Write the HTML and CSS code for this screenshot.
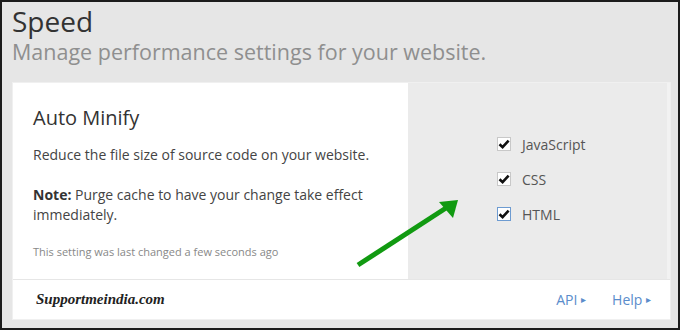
FILE: index.html
```html
<!DOCTYPE html>
<html lang="en">
<head>
    <meta charset="UTF-8">
    <title>Speed</title>
    <link rel="stylesheet" href="styles.css">
</head>
<body>
    <div class="frame">
        <div class="page-head">
            <h1 class="title">Speed</h1>
            <p class="subtitle">Manage performance settings for your website.</p>
        </div>

        <div class="card">
            <div class="card-body">
                <div class="card-main">
                    <h2 class="card-title">Auto Minify</h2>
                    <p class="text">Reduce the file size of source code on your website.</p>
                    <p class="text"><strong>Note:</strong> Purge cache to have your change take effect immediately.</p>
                    <p class="changed">This setting was last changed a few seconds ago</p>
                </div>

                <div class="card-side">
                    <label class="check">
                        <span class="box">
                            <svg width="14" height="14" viewBox="0 0 14 14"><path d="M2.5 7.2 L5.6 10.2 L11.6 3.6" fill="none" stroke="#111" stroke-width="2.6"/></svg>
                        </span>
                        JavaScript
                    </label>
                    <label class="check">
                        <span class="box">
                            <svg width="14" height="14" viewBox="0 0 14 14"><path d="M2.5 7.2 L5.6 10.2 L11.6 3.6" fill="none" stroke="#111" stroke-width="2.6"/></svg>
                        </span>
                        CSS
                    </label>
                    <label class="check">
                        <span class="box focus">
                            <svg width="14" height="14" viewBox="0 0 14 14"><path d="M2.5 7.2 L5.6 10.2 L11.6 3.6" fill="none" stroke="#111" stroke-width="2.6"/></svg>
                        </span>
                        HTML
                    </label>
                </div>
            </div>

            <div class="card-foot">
                <span class="brand">Supportmeindia.com</span>
                <div class="links">
                    <a class="link" href="#">API <span class="caret">&#9656;</span></a>
                    <a class="link" href="#">Help <span class="caret">&#9656;</span></a>
                </div>
            </div>
        </div>

        <!-- annotation arrow drawn over the page -->
        <svg class="arrow" width="680" height="330" viewBox="0 0 680 330">
            <line x1="358" y1="265" x2="446" y2="208" stroke="#119a11" stroke-width="5"/>
            <polygon points="458,200 439,202 453,218" fill="#119a11"/>
        </svg>
    </div>
</body>
</html>
```

FILE: styles.css
```css
* {
    margin: 0;
    padding: 0;
    box-sizing: border-box;
}

body {
    font-family: 'Open Sans', sans-serif;
}

.frame {
    position: relative;
    width: 680px;
    height: 330px;
    background: #e6e6e6;
    border: 2px solid #1c1c1c;
    padding: 0 7px 0 10px;
}

.page-head {
    height: 80px;
}

.title {
    font-size: 28px;
    font-weight: 400;
    color: #333;
    line-height: 36px;
    padding-top: 1px;
}

.subtitle {
    font-size: 21.5px;
    color: #8f8f8f;
    line-height: 30px;
    margin-top: -2px;
}

.card {
    background: #fff;
    border: 1px solid #f0f0f0;
    height: 238px;
    display: flex;
    flex-direction: column;
}

.card-body {
    display: flex;
    height: 197px;
    border-bottom: 1px solid #e6e6e6;
}

.card-main {
    width: 395px;
    padding: 20px 20px 0 20px;
    color: #444;
}

.card-title {
    font-size: 20px;
    font-weight: 400;
    color: #333;
    line-height: 30px;
    margin-bottom: 12px;
}

.text {
    font-size: 14px;
    line-height: 20px;
    margin-bottom: 20px;
}

.text strong {
    color: #333;
}

.changed {
    font-size: 11px;
    color: #888;
    margin-top: -1px;
}

.card-side {
    flex: 1;
    background: #ebebeb;
    border-right: 3px solid #f2f2f2;
    display: flex;
    flex-direction: column;
    justify-content: center;
    gap: 14px;
    padding: 0 0 4px 89px;
}

.check {
    display: flex;
    align-items: center;
    gap: 11px;
    font-size: 14px;
    color: #555;
    line-height: 21px;
}

.box {
    width: 14px;
    height: 14px;
    background: #fff;
    border: 1px solid #c8c8c8;
    display: flex;
    align-items: center;
    justify-content: center;
}

.box svg {
    flex: none;
}

.box.focus {
    border-color: #6d9bd1;
}

.card-foot {
    flex: 1;
    display: flex;
    align-items: center;
    justify-content: space-between;
    padding: 0 19px 0 23px;
}

.brand {
    font-family: 'Liberation Serif', serif;
    font-style: italic;
    font-weight: bold;
    font-size: 15px;
    color: #222;
}

.links {
    display: flex;
    gap: 26px;
}

.link {
    font-size: 14px;
    color: #5a8ccb;
    text-decoration: none;
}

.caret {
    font-size: 10px;
    vertical-align: 2px;
}

.arrow {
    position: absolute;
    top: -2px;
    left: -2px;
    pointer-events: none;
}
```
